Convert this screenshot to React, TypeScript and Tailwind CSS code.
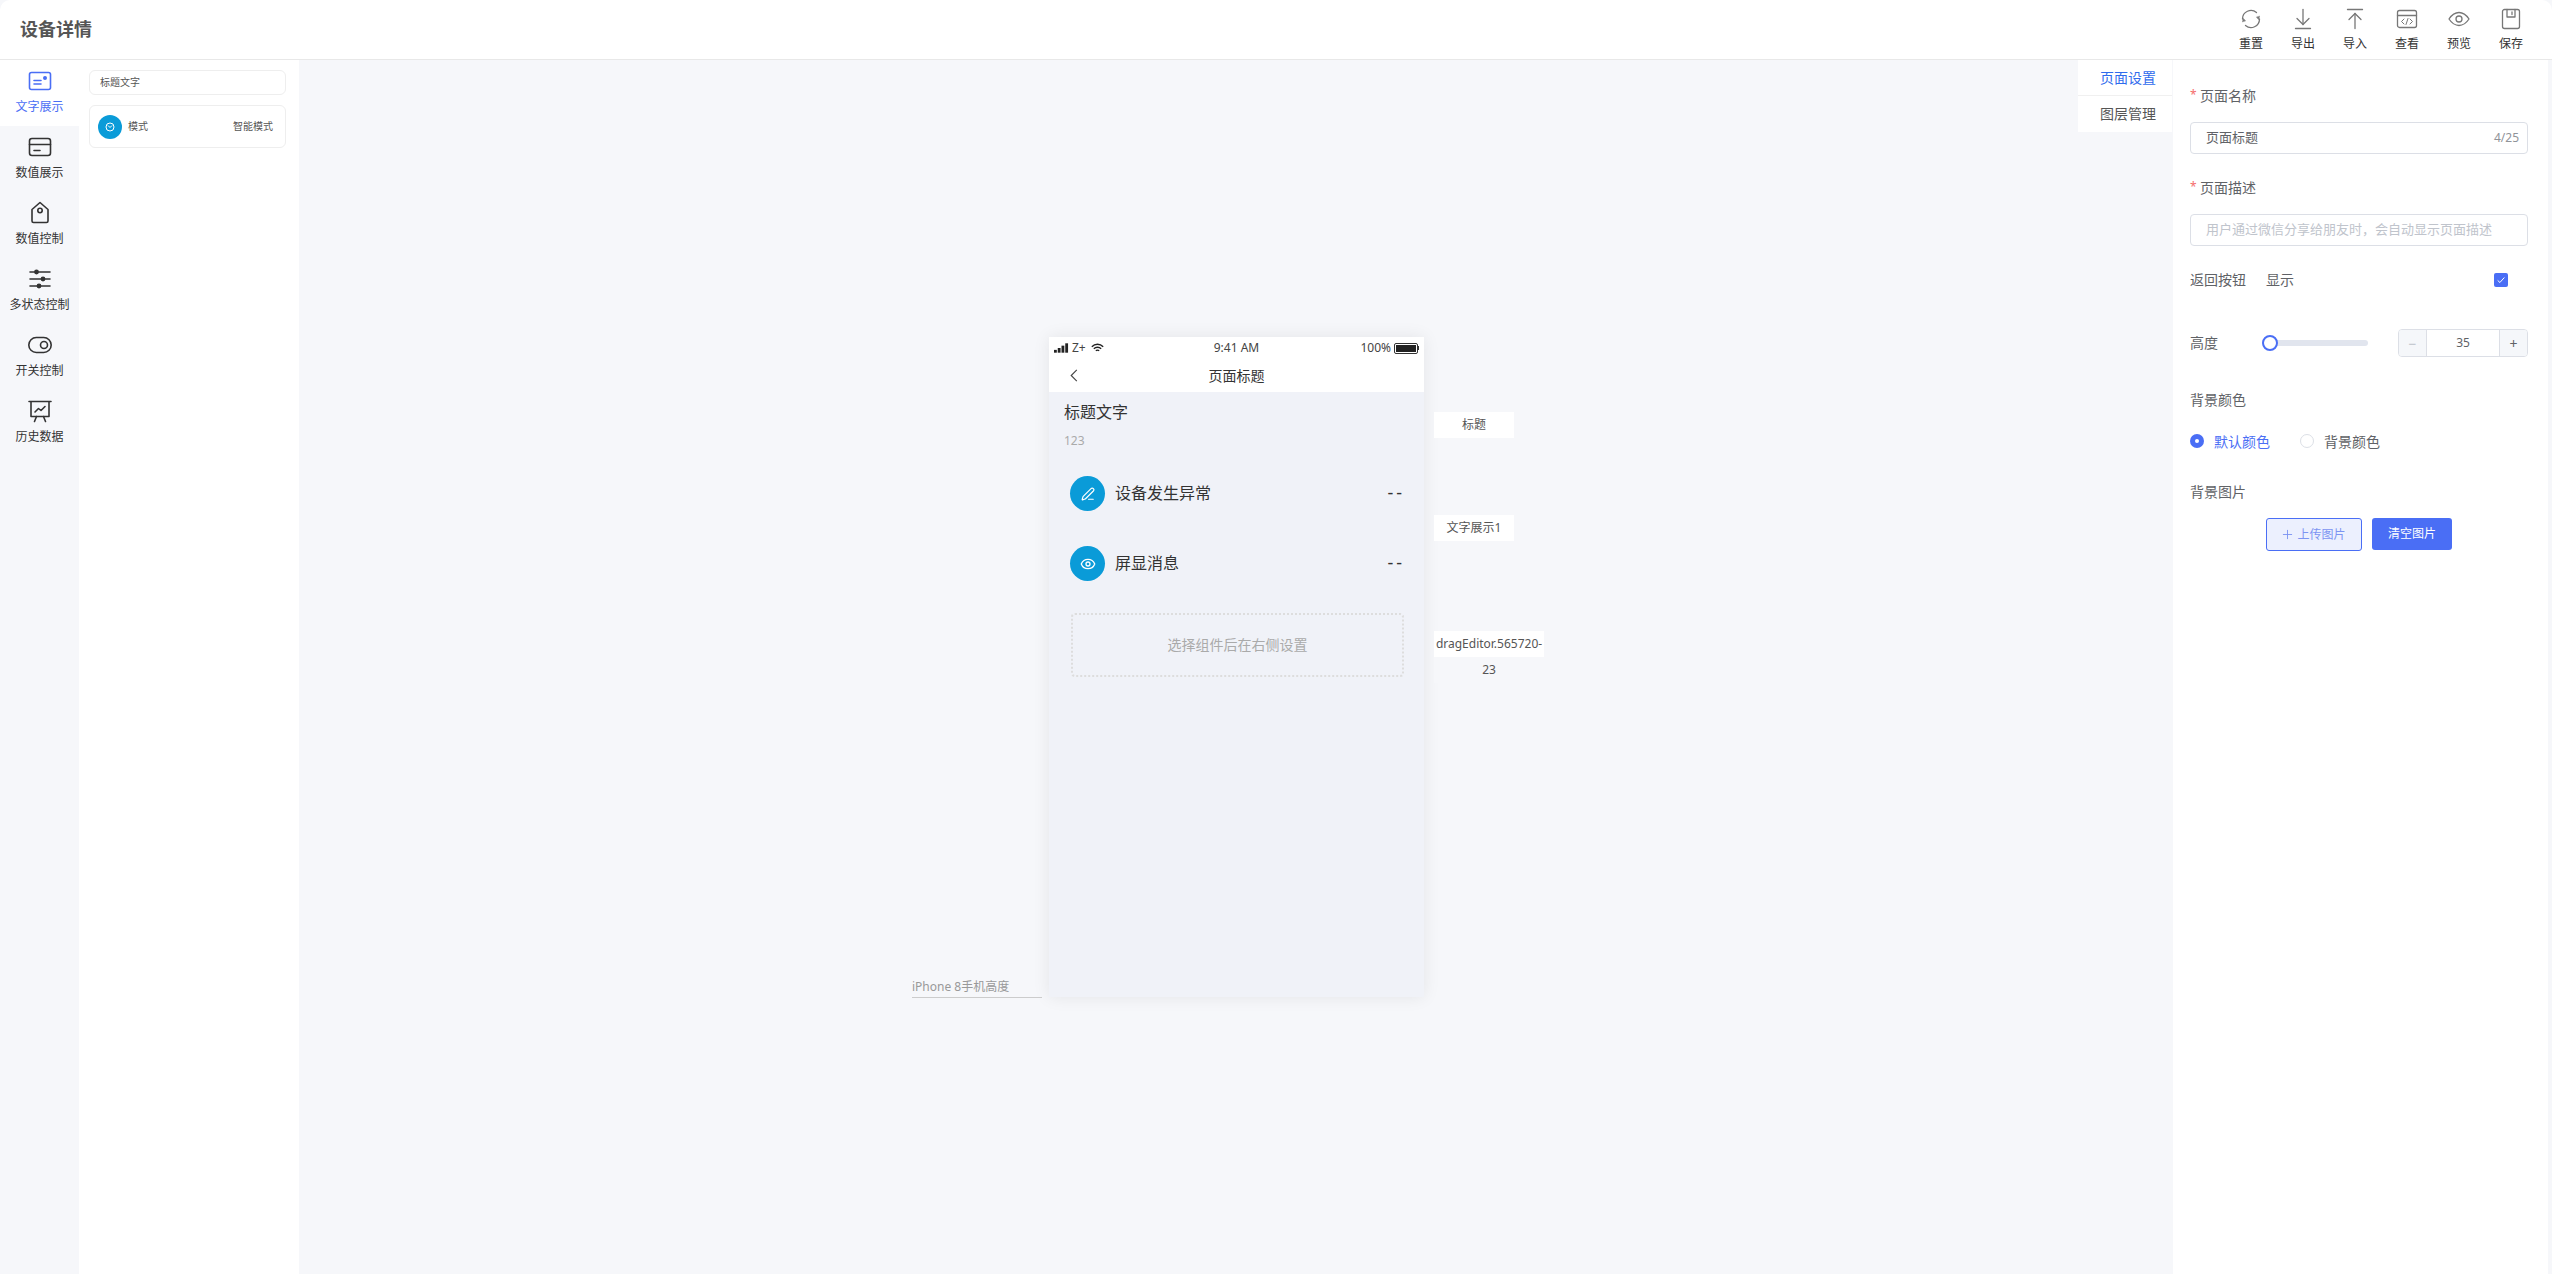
import { Eye, PenLine } from 'lucide-react';
import type { ReactNode } from 'react';

const Svg = ({ children, className, width = 1.3 }: { children: ReactNode; className?: string; width?: number }) => (
  <svg
    viewBox="0 0 24 24"
    fill="none"
    stroke="currentColor"
    strokeWidth={width}
    strokeLinecap="round"
    strokeLinejoin="round"
    className={className}
  >
    {children}
  </svg>
);

const toolbar = [
  {
    label: '重置',
    icon: (
      <>
        <path d="M3.500 12a8.500 8.500 0 0 1 14-6.500" />
        <path d="M20.500 12a8.500 8.500 0 0 1-14 6.500" />
        <path d="M20.500 9.500l-1 3-1.800-2.200z" fill="currentColor" strokeWidth={0.6} />
        <path d="M3.500 14.500l1-3 1.800 2.200z" fill="currentColor" strokeWidth={0.6} />
      </>
    ),
  },
  {
    label: '导出',
    icon: (
      <>
        <path d="M12 2.500v15" />
        <path d="M6 11.500l6 6 6-6" />
        <path d="M4.500 21.500h15" />
      </>
    ),
  },
  {
    label: '导入',
    icon: (
      <>
        <path d="M4.500 2.500h15" />
        <path d="M12 6.500v15" />
        <path d="M6 12.500l6-6 6 6" />
      </>
    ),
  },
  {
    label: '查看',
    icon: (
      <>
        <rect x="2.500" y="3.500" width="19" height="17" rx="2" />
        <path d="M2.500 8.500h19" />
        <path d="M9 12l-2.500 2.500L9 17M15 12l2.500 2.500L15 17M13 11.500l-2 6" strokeWidth={1} />
      </>
    ),
  },
  {
    label: '预览',
    icon: (
      <>
        <path d="M2 12c3-4.500 6.300-6.500 10-6.500s7 2 10 6.500c-3 4.500-6.300 6.500-10 6.500S5 16.500 2 12z" />
        <circle cx="12" cy="12" r="3" />
      </>
    ),
  },
  {
    label: '保存',
    icon: (
      <>
        <rect x="3.500" y="2.500" width="17" height="19" rx="2" />
        <path d="M8 2.500v7.500h8V2.500" />
        <path d="M13 5v2.500" />
      </>
    ),
  },
];

const rail = [
  {
    label: '文字展示',
    active: true,
    icon: (
      <>
        <rect x="1.500" y="3.500" width="21" height="17" rx="2" />
        <path d="M6 11.500h7M6 15h7" />
        <circle cx="17" cy="9" r="1.200" fill="currentColor" />
      </>
    ),
  },
  {
    label: '数值展示',
    icon: (
      <>
        <rect x="1.500" y="3.500" width="21" height="17" rx="2.500" />
        <path d="M1.500 9.500h21M6 15.500h6" />
      </>
    ),
  },
  {
    label: '数值控制',
    icon: (
      <>
        <path d="M4 8.500L12 1.500l8 7V20a1.500 1.500 0 0 1-1.500 1.500h-13A1.500 1.500 0 0 1 4 20z" />
        <circle cx="12" cy="9.500" r="2.200" />
      </>
    ),
  },
  {
    label: '多状态控制',
    icon: (
      <>
        <path d="M2 5h20M2 12h20M2 19h20" />
        <circle cx="8.500" cy="5" r="1.600" fill="currentColor" />
        <circle cx="15" cy="12" r="1.600" fill="currentColor" />
        <circle cx="11" cy="19" r="1.600" fill="currentColor" />
      </>
    ),
  },
  {
    label: '开关控制',
    icon: (
      <>
        <rect x="0.800" y="4.500" width="22.400" height="15" rx="7.500" />
        <circle cx="16" cy="12" r="3.500" />
      </>
    ),
  },
  {
    label: '历史数据',
    icon: (
      <>
        <path d="M1 2.500h22M3 2.500v15h18v-15" />
        <path d="M7 13l3.500-3.500 2.500 2L17 7.500" />
        <path d="M8.500 17.500l-2 5M15.500 17.500l2 5" />
      </>
    ),
  },
];

const FormLabel = ({ children, required }: { children: ReactNode; required?: boolean }) => (
  <div className={`flex h-[20px] items-center text-[14px] text-[#606266] ${required ? 'pb-[2px]' : ''}`}>
    {required && <span className="mr-[5px] w-[5px] text-[12px] text-[#f56c6c]">*</span>}
    {children}
  </div>
);

const CanvasTag = ({ className, children }: { className: string; children: ReactNode }) => (
  <div className={`absolute left-[385px] bg-white text-center text-[12px] leading-[26px] text-[#555] ${className}`}>
    {children}
  </div>
);

const PhoneRow = ({ label, icon }: { label: string; icon: ReactNode }) => (
  <div className="flex h-[35px] items-center pr-[22px] pl-[21px]">
    <div className="flex h-[35px] w-[35px] items-center justify-center rounded-full bg-[#0a9bd8] text-white">{icon}</div>
    <span className="ml-[10px] flex-1 pb-[2px] text-[16px] text-[#333]">{label}</span>
    <span className="-mr-[3px] pb-[2px] text-[18px] tracking-[3px] text-[#333]">--</span>
  </div>
);

const Phone = () => (
  <div className="relative ml-px h-[660px] w-[375px] bg-[#f0f2f8] shadow-[0_0_16px_rgba(0,0,0,0.08)]">
    <div className="h-[55px] bg-white">
      <div className="flex h-[21px] items-center px-[5px] pt-[1px] text-[12px] text-[#444]">
        <div className="flex w-[125px] items-center gap-[3px]">
          <svg viewBox="0 0 16 10" className="h-[10px] w-[15px] fill-[#222]">
            <rect x="0" y="7" width="3" height="3" />
            <rect x="4" y="5" width="3" height="5" />
            <rect x="8" y="2.500" width="3" height="7.500" />
            <rect x="12" y="0" width="3" height="10" />
          </svg>
          <span>Z+</span>
          <svg viewBox="0 0 16 12" fill="none" stroke="#222" strokeWidth={1.800} className="ml-[2px] h-[10px] w-[13px]">
            <path d="M1 4.500c4-4 10-4 14 0M3.500 7c2.500-2.500 6.500-2.500 9 0M6 9.500c1-1 3-1 4 0" />
          </svg>
        </div>
        <span className="flex-1 text-center">9:41 AM</span>
        <div className="flex w-[125px] items-center justify-end gap-[3px]">
          <span>100%</span>
          <div className="h-[11px] w-[24px] rounded-[2px] border border-[#333] bg-[#222] bg-clip-content p-[1px]" />
          <div className="-ml-[3px] h-[4px] w-[1px] bg-[#333]" />
        </div>
      </div>
      <div className="relative flex h-[34px] items-center justify-center text-[14px] text-[#333]">
        <svg
          viewBox="0 0 10 16"
          fill="none"
          stroke="#444"
          strokeWidth={1.400}
          className="absolute left-[21px] h-[13px] w-[8px]"
        >
          <path d="M8.500 1L1.500 8l7 7" />
        </svg>
        页面标题
      </div>
    </div>
    <div className="pt-[10px] pl-[15px] text-[16px] leading-[20px] text-[#333]">标题文字</div>
    <div className="pt-[9px] pl-[15px] text-[12px] leading-[20px] text-[#aaa]">123</div>
    <div className="mt-[25px] flex flex-col gap-[35px]">
      <PhoneRow label="设备发生异常" icon={<PenLine size={14} strokeWidth={2} />} />
      <PhoneRow label="屏显消息" icon={<Eye size={16} strokeWidth={2} />} />
    </div>
    <div className="mt-[32px] ml-[22px] flex h-[64px] w-[333px] items-center justify-center rounded-[4px] border-2 border-dotted border-[#ddd] pb-[2px] text-[14px] text-[#aaa]">
      选择组件后在右侧设置
    </div>
    <CanvasTag className="top-[75px] w-[80px]">标题</CanvasTag>
    <CanvasTag className="top-[178px] w-[80px]">文字展示1</CanvasTag>
    <CanvasTag className="top-[294px] w-[110px] break-all">
      <span className="block bg-white">dragEditor.565720-</span>
      <span className="block bg-[#f6f7fa]">23</span>
    </CanvasTag>
    <div className="absolute right-[382px] bottom-[-1px] w-[130px] border-b border-[#ccc] text-[12px] leading-[20px] text-[#999]">
      iPhone 8手机高度
    </div>
  </div>
);

const SettingsPanel = () => (
  <aside className="w-[375px] shrink-0 bg-white pt-[26px] pr-[20px] pl-[17px]">
    <FormLabel required>页面名称</FormLabel>
    <div className="mt-[16px] flex h-[32px] items-center justify-between rounded-[4px] border border-[#dcdfe6] pr-[8px] pl-[15px] text-[13px] text-[#606266]">
      <span>页面标题</span>
      <span className="text-[12px] text-[#909399]">4/25</span>
    </div>
    <div className="mt-[24px]">
      <FormLabel required>页面描述</FormLabel>
    </div>
    <div className="mt-[16px] flex h-[32px] items-center rounded-[4px] border border-[#dcdfe6] pl-[15px] text-[13px] whitespace-nowrap text-[#c0c4cc]">
      用户通过微信分享给朋友时，会自动显示页面描述
    </div>
    <div className="mt-[24px] flex h-[20px] items-center text-[14px] text-[#606266]">
      <span className="w-[76px] pb-[2px]">返回按钮</span>
      <span className="flex-1 pb-[2px]">显示</span>
      <span className="mr-[20px] flex h-[14px] w-[14px] items-center justify-center rounded-[2px] bg-[#4a6ef5]">
        <svg viewBox="0 0 12 12" fill="none" stroke="white" strokeWidth={1.200} className="h-[10px] w-[10px]">
          <path d="M2 6.500l2.700 2.500L10 3" />
        </svg>
      </span>
    </div>
    <div className="mt-[39px] flex h-[28px] items-center">
      <span className="w-[72px] pb-[2px] text-[14px] text-[#606266]">高度</span>
      <div className="relative h-[6px] w-[106px] rounded-full bg-[#e1e5ee]">
        <span className="absolute top-[-5px] left-0 h-[16px] w-[16px] rounded-full border-2 border-[#4a6ef5] bg-white" />
      </div>
      <div className="ml-[30px] flex h-[28px] w-[130px] items-center overflow-hidden rounded-[4px] border border-[#dcdfe6] text-[14px]">
        <span className="flex h-full w-[28px] items-center justify-center border-r border-[#dcdfe6] bg-[#f5f7fa] text-[#c0c4cc]">−</span>
        <span className="flex-1 text-center text-[12px] text-[#606266]">35</span>
        <span className="flex h-full w-[28px] items-center justify-center border-l border-[#dcdfe6] bg-[#f5f7fa] text-[#606266]">+</span>
      </div>
    </div>
    <div className="mt-[32px]">
      <FormLabel>背景颜色</FormLabel>
    </div>
    <div className="mt-[22px] flex h-[20px] items-center text-[14px]">
      <span className="flex h-[14px] w-[14px] items-center justify-center rounded-full bg-[#4a6ef5]">
        <span className="h-[4px] w-[4px] rounded-full bg-white" />
      </span>
      <span className="ml-[10px] text-[#4a6ef5]">默认颜色</span>
      <span className="ml-[30px] h-[14px] w-[14px] rounded-full border border-[#dcdfe6]" />
      <span className="ml-[10px] text-[#606266]">背景颜色</span>
    </div>
    <div className="mt-[30px]">
      <FormLabel>背景图片</FormLabel>
    </div>
    <div className="mt-[17px] ml-[76px] flex gap-[10px] text-[12px]">
      <button className="flex h-[33px] w-[96px] items-center justify-center gap-[4px] rounded-[3px] border border-[#4a6ef5] bg-[#ecf0fe] text-[#7c94f2]">
        <svg viewBox="0 0 12 12" fill="none" stroke="currentColor" strokeWidth={1} className="h-[11px] w-[11px]">
          <path d="M6 1v10M1 6h10" />
        </svg>
        上传图片
      </button>
      <button className="h-[32px] w-[80px] rounded-[3px] bg-[#4a6ef5] text-white">清空图片</button>
    </div>
  </aside>
);

export default function App() {
  return (
    <div className="flex h-[1274px] flex-col overflow-hidden bg-[#f6f7fa] font-['Noto_Sans','Noto_Sans_CJK_SC',sans-serif]">
      <header className="flex h-[60px] shrink-0 items-center justify-between rounded-t-[10px] border-b border-[#e8e8e8] bg-white pr-[15px] pl-[20px]">
        <h1 className="text-[18px] font-bold text-[#555]">设备详情</h1>
        <div className="flex">
          {toolbar.map((item) => (
            <div key={item.label} className="flex w-[52px] flex-col items-center pt-[1px] text-[12px] text-[#333]">
              <Svg className="h-[24px] w-[24px] text-[#777]">{item.icon}</Svg>
              <span className="mt-[4px] leading-[18px]">{item.label}</span>
            </div>
          ))}
        </div>
      </header>

      <div className="flex min-h-0 flex-1">
        <nav className="w-[79px] shrink-0">
          {rail.map((item) => (
            <div
              key={item.label}
              className={`flex h-[66px] flex-col items-center pt-[9px] text-[12px] ${item.active ? 'bg-white text-[#4a6ef5]' : 'text-[#333]'}`}
            >
              <Svg width={1.6} className="h-[24px] w-[24px]">
                {item.icon}
              </Svg>
              <span className="mt-[4px] leading-[20px]">{item.label}</span>
            </div>
          ))}
        </nav>

        <section className="w-[220px] shrink-0 bg-white pt-[10px] pr-[13px] pl-[10px]">
          <div className="flex h-[25px] items-center rounded-[6px] border border-[#eee] pl-[10px] text-[10px] text-[#555]">标题文字</div>
          <div className="mt-[10px] flex h-[43px] items-center rounded-[6px] border border-[#eee] pr-[12px] pl-[8px] text-[10px] text-[#555]">
            <span className="flex h-[24px] w-[24px] items-center justify-center rounded-full bg-[#0a9bd8]">
              <svg viewBox="0 0 12 12" fill="none" stroke="white" strokeWidth={1} className="h-[12px] w-[12px]">
                <circle cx="6" cy="6" r="4" />
                <path d="M4 4.500L6 6.500l2-2" />
              </svg>
            </span>
            <span className="ml-[6px] flex-1">模式</span>
            <span>智能模式</span>
          </div>
        </section>

        <main className="relative flex min-w-0 flex-1 items-center justify-center">
          <Phone />
          <div className="absolute top-0 right-px w-[94px] bg-white pl-[22px] text-[14px]">
            <div className="-ml-[22px] h-[36px] border-b border-[#f0f0f0] pl-[22px] leading-[35px] text-[#2f6bed]">页面设置</div>
            <div className="h-[36px] leading-[36px] text-[#555]">图层管理</div>
          </div>
        </main>

        <SettingsPanel />
        <div className="w-[4px] shrink-0" />
      </div>
    </div>
  );
}
